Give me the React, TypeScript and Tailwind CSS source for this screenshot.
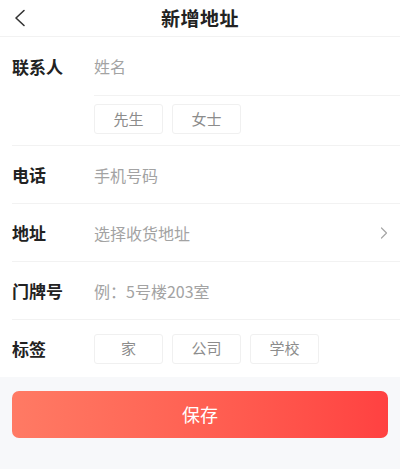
import React from "react";

const font = { fontFamily: '"Noto Sans CJK SC", "Noto Sans", sans-serif' };

function Chip({ text }: { text: string }) {
  return (
    <div className="w-[69px] h-[30px] flex items-center justify-center border border-[#f0f0f0] rounded-[3px] text-[15px] text-[#8c8c8c]">
      {text}
    </div>
  );
}

function Row({ label, children, right }: { label: string; children: React.ReactNode; right?: React.ReactNode }) {
  return (
    <div className="ml-3 h-[58px] flex items-center border-b border-[#f2f2f2]">
      <div className="w-[82px] text-[17px] font-bold text-[#222]">{label}</div>
      <div className="flex-1 text-[16px] text-[#a3a3a3]">{children}</div>
      {right}
    </div>
  );
}

export default function App() {
  return (
    <div style={font} className="w-[400px] h-[469px] bg-[#f7f8fa] flex flex-col overflow-hidden">
      <div className="bg-white">
        <div className="relative h-[37px] flex items-center justify-center border-b border-[#f2f2f2]">
          <svg className="absolute left-[13px] top-[9px]" width="13" height="18" viewBox="0 0 13 18" fill="none">
            <path d="M11 1.5L3 9l8 7.5" stroke="#333" strokeWidth="1.6" strokeLinecap="round" strokeLinejoin="round" />
          </svg>
          <div className="text-[19px] font-bold text-[#222] tracking-[0.5px]">新增地址</div>
        </div>

        <div className="ml-3 flex border-b border-[#f2f2f2]">
          <div className="w-[82px] h-[59px] flex items-center text-[17px] font-bold text-[#222]">联系人</div>
          <div className="flex-1 flex flex-col">
            <div className="h-[59px] flex items-center border-b border-[#f2f2f2] text-[16px] text-[#a3a3a3]">姓名</div>
            <div className="h-[49px] pt-[8px] flex gap-[9px]">
              <Chip text="先生" />
              <Chip text="女士" />
            </div>
          </div>
        </div>

        <Row label="电话">手机号码</Row>
        <Row
          label="地址"
          right={
            <svg className="mr-[12px]" width="8" height="12" viewBox="0 0 8 12" fill="none">
              <path d="M1.5 1l5 5-5 5" stroke="#a6a6a6" strokeWidth="1.2" strokeLinecap="round" strokeLinejoin="round" />
            </svg>
          }
        >
          选择收货地址
        </Row>
        <Row label="门牌号">例：5号楼203室</Row>
        <div className="ml-3 h-[57px] flex items-center">
          <div className="w-[82px] text-[17px] font-bold text-[#222]">标签</div>
          <div className="flex gap-[9px]">
            <Chip text="家" />
            <Chip text="公司" />
            <Chip text="学校" />
          </div>
        </div>
      </div>

      <div className="mx-3 mt-[14px] h-[47px] rounded-[7px] bg-gradient-to-r from-[#ff7a64] to-[#ff4141] flex items-center justify-center text-white text-[18px]">
        保存
      </div>
    </div>
  );
}
